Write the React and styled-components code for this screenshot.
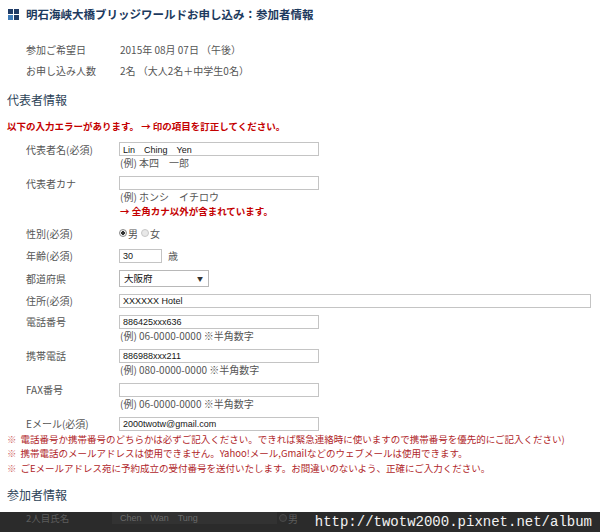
import React from "react";
import styled, { createGlobalStyle } from "styled-components";

const GlobalStyle = createGlobalStyle`
  html, body {
    margin: 0;
    padding: 0;
    background: #ffffff;
  }
  body {
    font-family: "Noto Sans CJK JP", "Noto Sans", sans-serif;
  }
`;

const Page = styled.div`
  position: relative;
  width: 600px;
  height: 532px;
  overflow: hidden;
  padding-left: 7px;
  box-sizing: border-box;
  display: flex;
  flex-direction: column;
`;

const Title = styled.h1`
  margin: 0;
  height: 28px;
  display: flex;
  align-items: center;
  gap: 7px;
  padding-left: 1px;
  font-size: 11.5px;
  font-weight: bold;
  color: #1d3a5e;
`;

const Logo = styled.span`
  display: grid;
  grid-template-columns: 5px 5px;
  grid-template-rows: 5px 5px;
  gap: 1px;
`;

const LogoCell = styled.span`
  background: ${(p) => (p.$light ? "#3f7cb8" : "#1f3b66")};
`;

const InfoTable = styled.div`
  margin-top: 11px;
  padding-left: 19px;
`;

const InfoRow = styled.div`
  display: grid;
  grid-template-columns: 94px 1fr;
  line-height: 21px;
  font-size: 10px;
  color: #555;
`;

const SectionHeading = styled.h2`
  margin: ${(p) => p.$top}px 0 0;
  line-height: 20px;
  font-size: 12px;
  font-weight: normal;
  color: #2d4358;
`;

const ErrorMessage = styled.p`
  margin: 8px 0 0;
  line-height: 16px;
  font-size: 9.5px;
  font-weight: bold;
  color: #c40000;
`;

const Form = styled.div`
  display: flex;
  flex-direction: column;
  gap: 7px;
  margin-top: 8px;
  padding-left: 19px;
`;

const Field = styled.div`
  display: grid;
  grid-template-columns: 93px 1fr;
  align-items: start;
`;

const Label = styled.div`
  height: ${(p) => p.$h || 14}px;
  display: flex;
  align-items: center;
  font-size: 10px;
  color: #555;
`;

const Control = styled.div`
  display: flex;
  flex-direction: column;
  align-items: flex-start;
`;

const InlineControl = styled.div`
  display: flex;
  align-items: center;
  gap: 6px;
  height: 14px;
  font-size: 10px;
  color: #555;
`;

const TextInput = styled.input`
  box-sizing: border-box;
  width: ${(p) => p.$w}px;
  height: 14px;
  margin: 0;
  padding: 0 3px;
  border: 1px solid #c4c4c4;
  background: #fff;
  font-family: "Liberation Sans", "Noto Sans CJK JP", sans-serif;
  font-size: 9px;
  color: #151515;
  outline: none;
`;

const Hint = styled.div`
  line-height: 13px;
  font-size: ${(p) => (p.$error ? 9.5 : 10)}px;
  color: ${(p) => (p.$error ? "#c40000" : "#555")};
  font-weight: ${(p) => (p.$error ? "bold" : "normal")};
  margin: ${(p) => (p.$error ? "1.5px" : "0")} 0 0 1px;
`;

const Radio = styled.span`
  display: flex;
  align-items: center;
  gap: 1px;
  font-size: 10px;
  color: ${(p) => (p.$dim ? "#5c5c5c" : "#555")};
`;

const RadioDot = styled.span`
  box-sizing: border-box;
  width: 8px;
  height: 8px;
  border-radius: 50%;
  border: 1px solid
    ${(p) => (p.$dim ? "#4a4a4a" : p.$checked ? "#8a8a8a" : "#c8c8c8")};
  background: ${(p) =>
    p.$dim
      ? "#353535"
      : p.$checked
      ? "radial-gradient(circle, #333 0 1.6px, #eee 2px)"
      : "#e8e8e8"};
`;

const RadioGroup = styled.div`
  display: flex;
  align-items: center;
  gap: 3px;
  height: ${(p) => p.$h || 17}px;
`;

const Select = styled.div`
  box-sizing: border-box;
  width: 90px;
  height: 17px;
  border: 1px solid #b8b8b8;
  background: #fff;
  display: flex;
  align-items: center;
  justify-content: space-between;
  padding: 0 5px 0 4px;
  font-size: 9.5px;
  color: #111;
`;

const Caret = styled.span`
  font-size: 6px;
  color: #333;
`;

const Notes = styled.div`
  margin-top: 1px;
  display: flex;
  flex-direction: column;
`;

const Note = styled.div`
  line-height: 14.5px;
  font-size: 9.5px;
  color: #b0262a;
  white-space: nowrap;
`;

const Mark = styled.span`
  color: #d26a6a;
  margin-right: 4px;
`;

const Footer = styled.div`
  position: relative;
  margin: 7px 0 0 -7px;
  height: 20px;
  background: #2b2b2b;
  display: grid;
  grid-template-columns: 93px 160px 1fr;
  align-items: start;
  padding-left: 26px;
  box-sizing: border-box;
`;

const DimText = styled.div`
  line-height: 12px;
  font-size: 9.5px;
  color: #5c5c5c;
`;

const DimInput = styled.div`
  margin-left: -7px;
  padding-left: 8px;
  width: 165px;
  height: 12px;
  background: #323232;
  line-height: 12px;
  font-family: "Liberation Sans", sans-serif;
  font-size: 9px;
  color: #6a6a6a;
  box-sizing: border-box;
`;

const Watermark = styled.div`
  position: absolute;
  right: 8px;
  top: 2px;
  font-family: "Liberation Mono", "DejaVu Sans Mono", monospace;
  font-size: 14px;
  line-height: 16px;
  color: #f2f2f2;
`;

const info = [
  ["参加ご希望日", "2015年 08月 07日 （午後）"],
  ["お申し込み人数", "2名 （大人2名＋中学生0名）"],
];

const phoneFields = [
  ["電話番号", "886425xxx636", "(例) 06-0000-0000 ※半角数字"],
  ["携帯電話", "886988xxx211", "(例) 080-0000-0000 ※半角数字"],
  ["FAX番号", "", "(例) 06-0000-0000 ※半角数字"],
];

const notes = [
  "電話番号か携帯番号のどちらかは必ずご記入ください。できれば緊急連絡時に使いますので携帯番号を優先的にご記入ください)",
  "携帯電話のメールアドレスは使用できません。Yahoo!メール,Gmailなどのウェブメールは使用できます。",
  "ごEメールアドレス宛に予約成立の受付番号を送付いたします。お間違いのないよう、正確にご入力ください。",
];

export default function App() {
  return (
    <Page>
      <GlobalStyle />
      <Title>
        <Logo>
          <LogoCell />
          <LogoCell />
          <LogoCell $light />
          <LogoCell />
        </Logo>
        明石海峡大橋ブリッジワールドお申し込み：参加者情報
      </Title>

      <InfoTable>
        {info.map(([k, v]) => (
          <InfoRow key={k}>
            <span>{k}</span>
            <span>{v}</span>
          </InfoRow>
        ))}
      </InfoTable>

      <SectionHeading $top={9}>代表者情報</SectionHeading>
      <ErrorMessage>以下の入力エラーがあります。 → 印の項目を訂正してください。</ErrorMessage>

      <Form>
        <Field>
          <Label>代表者名(必須)</Label>
          <Control>
            <TextInput $w={200} readOnly value="Lin　Ching　Yen" />
            <Hint>(例) 本四　一郎</Hint>
          </Control>
        </Field>

        <Field>
          <Label>代表者カナ</Label>
          <Control>
            <TextInput $w={200} readOnly value="" />
            <Hint>(例) ホンシ　イチロウ</Hint>
            <Hint $error>→ 全角カナ以外が含まれています。</Hint>
          </Control>
        </Field>

        <Field>
          <Label $h={17}>性別(必須)</Label>
          <RadioGroup>
            <Radio>
              <RadioDot $checked />男
            </Radio>
            <Radio>
              <RadioDot />女
            </Radio>
          </RadioGroup>
        </Field>

        <Field>
          <Label>年齢(必須)</Label>
          <InlineControl>
            <TextInput $w={43} readOnly value="30" />
            <span>歳</span>
          </InlineControl>
        </Field>

        <Field>
          <Label $h={17}>都道府県</Label>
          <Select>
            <span>大阪府</span>
            <Caret>▼</Caret>
          </Select>
        </Field>

        <Field>
          <Label>住所(必須)</Label>
          <TextInput $w={472} readOnly value="XXXXXX Hotel" />
        </Field>

        {phoneFields.map(([label, value, hint]) => (
          <Field key={label}>
            <Label>{label}</Label>
            <Control>
              <TextInput $w={200} readOnly value={value} />
              <Hint>{hint}</Hint>
            </Control>
          </Field>
        ))}

        <Field>
          <Label>Eメール(必須)</Label>
          <TextInput $w={200} readOnly value="2000twotw@gmail.com" />
        </Field>
      </Form>

      <Notes>
        {notes.map((n) => (
          <Note key={n}>
            <Mark>※</Mark>
            {n}
          </Note>
        ))}
      </Notes>

      <SectionHeading $top={10}>参加者情報</SectionHeading>

      <Footer>
        <DimText>2人目氏名</DimText>
        <DimInput>Chen　Wan　Tung</DimInput>
        <RadioGroup $h={12}>
          <Radio $dim>
            <RadioDot $dim />男
          </Radio>
        </RadioGroup>
        <Watermark>http://twotw2000.pixnet.net/album</Watermark>
      </Footer>
    </Page>
  );
}
